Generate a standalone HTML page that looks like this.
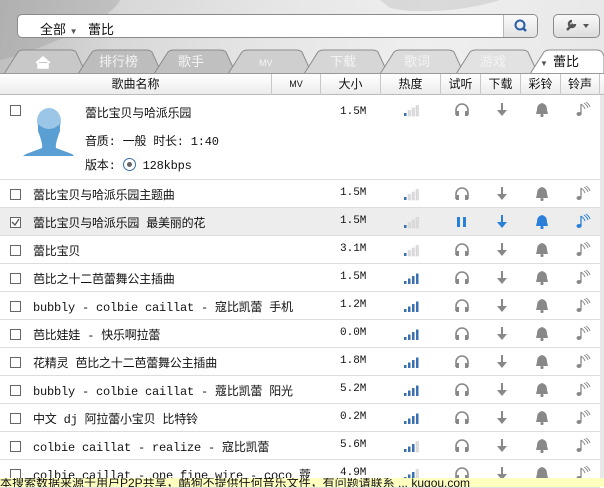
<!DOCTYPE html>
<html><head><meta charset="utf-8"><style>
*{margin:0;padding:0;box-sizing:border-box}
body{width:604px;height:487px;overflow:hidden;font-family:"Liberation Sans","Noto Sans CJK SC",sans-serif;font-size:12px;color:#111;background:#fff;position:relative}
.top{position:absolute;left:0;top:0;width:604px;height:74px;background:linear-gradient(100deg,#bdbdbd 0%,#d8d8d8 20%,#e6e6e6 45%,#efefef 70%,#e8e8e8 100%)}
.search{position:absolute;left:17px;top:14px;width:521px;height:24px;border:1px solid #8a8a8a;border-radius:5px;background:#fff}
.search .a{position:absolute;left:22px;top:4px;font-size:13px}
.search .k{position:absolute;left:70px;top:4px;font-size:13px}
.sbtn{position:absolute;right:0;top:0;width:34px;height:22px;border-left:1px solid #bbb;background:linear-gradient(#fafafa,#e2e2e2);border-radius:0 4px 4px 0}
.tool{position:absolute;left:553px;top:14px;width:47px;height:24px;border:1px solid #8a8a8a;border-radius:5px;background:linear-gradient(#fafafa,#dcdcdc)}
.hdr{position:absolute;left:0;top:73px;width:604px;height:22px;background:linear-gradient(#fff,#ececec);border-top:1px solid #999;border-bottom:1px solid #bbb}
.hdr div{position:absolute;top:0;height:21px;line-height:20px;text-align:center;border-right:1px solid #c8c8c8;font-size:12px}
.row{position:absolute;left:0;width:600px;height:28px;border-bottom:1px solid #ddd;font-family:"Liberation Mono","Noto Sans CJK SC",monospace}
.row .cb{position:absolute;left:10px;top:9px;width:11px;height:11px;border:1px solid #666;background:#fff}
.row .t{position:absolute;left:33px;top:6px;font-size:12px;white-space:nowrap;font-family:"Liberation Mono","Noto Sans CJK SC",monospace;letter-spacing:-0.2px}
.row .s{position:absolute;left:340px;top:7px;font-size:11px}
.row svg,.ic svg{position:absolute;top:0}
.foot{position:absolute;left:0;top:478px;width:604px;height:9px;background:#ffffc0;overflow:hidden;font-size:12px;line-height:10px;white-space:nowrap}
.sb{position:absolute;left:600px;top:95px;width:4px;height:383px;background:#e8e8e8}
</style></head><body>
<div class="top">
<svg width="604" height="74" style="position:absolute;left:0;top:0">
<path d="M0 0 L120 0 C110 20 60 40 20 55 L0 60Z" fill="#999" opacity=".35"/>
<path d="M380 0 L500 0 C470 10 420 15 390 8Z" fill="#aaa" opacity=".3"/>
<g fill="#d0d0d0" stroke="#8c8c8c" stroke-width="1">
<path d="M4 74 L18 52 Q20 50 24 50 L70 50 Q74 50 76 52 L86 74Z" fill="#c8c8c8"/>
<path d="M78 74 L92 52 Q94 50 98 50 L146 50 Q150 50 152 52 L162 74Z" fill="#bdbdbd"/>
<path d="M154 74 L168 52 Q170 50 174 50 L220 50 Q224 50 226 52 L236 74Z" fill="#c0c0c0"/>
<path d="M228 74 L242 52 Q244 50 248 50 L296 50 Q300 50 302 52 L312 74Z" fill="#cfcfcf"/>
<path d="M304 74 L318 52 Q320 50 324 50 L372 50 Q376 50 378 52 L388 74Z" fill="#d6d6d6"/>
<path d="M380 74 L394 52 Q396 50 400 50 L448 50 Q452 50 454 52 L464 74Z" fill="#dcdcdc"/>
<path d="M456 74 L470 52 Q472 50 476 50 L522 50 Q526 50 528 52 L538 74Z" fill="#e2e2e2"/>
<path d="M530 74 L544 52 Q546 50 550 50 L596 50 Q600 50 602 52 L604 56 L604 74Z" fill="#fff"/>
</g>
<path d="M36 63 L43 57 L50 63 M38 62 L38 68 L48 68 L48 62" fill="#fff" stroke="#fff" stroke-width="1.5"/>
<g font-size="13" fill="#f4f4f4" font-family="Liberation Sans,Noto Sans CJK SC,sans-serif">
<text x="99" y="66">排行榜</text><text x="178" y="66">歌手</text><text x="259" y="66" font-size="9">MV</text>
<text x="330" y="66">下载</text><text x="404" y="66">歌词</text><text x="480" y="66">游戏</text></g>
<text x="540" y="66" font-size="8" fill="#555">▼</text>
<text x="553" y="66" font-size="13" fill="#111" font-family="Liberation Sans,Noto Sans CJK SC,sans-serif">蕾比</text>
</svg>
<div class="search"><span class="a">全部 <span style="font-size:8px;color:#555">▼</span></span><span class="k">蕾比</span>
<div class="sbtn"><svg width="34" height="22"><circle cx="16" cy="10" r="4.5" fill="none" stroke="#2a5fa8" stroke-width="2"/><path d="M19 13 L22 16" stroke="#2a5fa8" stroke-width="2.5"/></svg></div></div>
<div class="tool"><svg width="47" height="22"><path d="M13 15 L19 9 M18 6 a3 3 0 1 0 3 3" stroke="#555" stroke-width="2.5" fill="none"/><path d="M29 9 L35 9 L32 13Z" fill="#555"/></svg></div>
</div>
<div class="hdr">
<div style="left:0;width:272px">歌曲名称</div><div style="left:272px;width:49px;font-size:9px">MV</div><div style="left:321px;width:60px">大小</div><div style="left:381px;width:60px">热度</div><div style="left:441px;width:40px">试听</div><div style="left:481px;width:40px">下载</div><div style="left:521px;width:40px">彩铃</div><div style="left:561px;width:39px">铃声</div>
</div>
<div class="sb"></div>
<!-- expanded row -->
<div class="row" style="top:96px;height:84px">
<div class="cb"></div>
<svg width="60" height="70" style="left:20px;top:10px"><ellipse cx="29" cy="15" rx="12" ry="13" fill="#9cc6e8"/><path d="M18 18 Q29 28 40 18 L40 25 Q35 38 36 42 L52 48 L54 50 L3 50 L6 48 L22 42 Q23 38 18 25Z" fill="#5a9fd4"/></svg>
<div class="t" style="left:85px;top:8px">蕾比宝贝与哈派乐园</div>
<div class="t" style="left:85px;top:36px">音质:  一般   时长: 1:40</div>
<div class="t" style="left:85px;top:60px">版本: <span style="display:inline-block;width:13px;height:13px;border:1px solid #3a6ea5;border-radius:50%;vertical-align:-2px;position:relative"><span style="position:absolute;left:3px;top:3px;width:5px;height:5px;border-radius:50%;background:#666"></span></span> 128kbps</div>
<div class="s" style="top:10px">1.5M</div>
</div>
<div id="rows"></div>
<script>
var R=[["蕾比宝贝与哈派乐园主题曲","1.5M",1],["蕾比宝贝与哈派乐园 最美丽的花","1.5M",1,1],["蕾比宝贝","3.1M",1],["芭比之十二芭蕾舞公主插曲","1.5M",4],["bubbly - colbie caillat - 寇比凯蕾 手机","1.2M",4],["芭比娃娃 - 快乐啊拉蕾","0.0M",4],["花精灵 芭比之十二芭蕾舞公主插曲","1.8M",4],["bubbly - colbie caillat - 蔻比凯蕾 阳光","5.2M",4],["中文 dj 阿拉蕾小宝贝 比特铃","0.2M",4],["colbie caillat - realize - 寇比凯蕾","5.6M",3],["colbie caillat - one fine wire - coco 蔻","4.9M",3]];
function icons(y,sel,lv){var c=sel?"#2a7fd8":"#888",s='';
s+='<svg width="20" height="28" style="left:401px">';for(var i=0;i<4;i++){var h=3+i*2.5;s+='<rect x="'+(3+i*4)+'" y="'+(20-h)+'" width="2.5" height="'+h+'" fill="'+(i<lv?'#3a6fb0':'#ddd')+'" stroke="'+(i<lv?'none':'#ccc')+'" stroke-width=".5"/>';}s+='</svg>';
if(sel)s+='<svg width="20" height="28" style="left:452px"><rect x="5" y="9" width="3" height="10" fill="'+c+'"/><rect x="11" y="9" width="3" height="10" fill="'+c+'"/></svg>';
else s+='<svg width="20" height="28" style="left:452px"><path d="M4 19 L4 14 A6 6 0 0 1 16 14 L16 19" fill="none" stroke="'+c+'" stroke-width="1.6"/><rect x="4" y="15" width="3" height="5" fill="'+c+'"/><rect x="13" y="15" width="3" height="5" fill="'+c+'"/></svg>';
s+='<svg width="20" height="28" style="left:492px"><path d="M10 7 L10 18" stroke="'+c+'" stroke-width="2"/><path d="M5 14 L10 20 L15 14Z" fill="'+c+'"/></svg>';
s+='<svg width="20" height="28" style="left:532px"><path d="M10 7 Q15 8 15 14 L16 18 L4 18 L5 14 Q5 8 10 7Z" fill="'+c+'"/><circle cx="10" cy="19.5" r="1.6" fill="'+c+'"/></svg>';
s+='<svg width="20" height="28" style="left:574px"><path d="M7 8 L7 18" stroke="'+c+'" stroke-width="1.3"/><ellipse cx="5" cy="18" rx="2.5" ry="2" fill="'+c+'"/><path d="M7 8 Q10 10 11 13 M10 7 Q13 9 14 12 M12 6 Q15 8 16 11" stroke="'+c+'" fill="none"/></svg>';
return s;}
var h='';
h+='<div class="ic" style="position:absolute;left:0;top:96px;width:600px;height:28px">'+icons(0,0,1)+'</div>';
for(var i=0;i<R.length;i++){var r=R[i],y=180+i*28;
h+='<div class="row" style="top:'+y+'px;'+(r[3]?'background:#ededed;':'')+'"><div class="cb">'+(r[3]?'<svg width="9" height="9" style="top:0;left:0"><path d="M1 4 L4 7 L8 1" stroke="#555" fill="none" stroke-width="1.3"/></svg>':'')+'</div><div class="t">'+r[0]+'</div><div class="s">'+r[1]+'</div>'+icons(y,r[3],r[2])+'</div>';}
document.getElementById('rows').innerHTML=h;
</script>
<div class="foot">本搜索数据来源于用户P2P共享，酷狗不提供任何音乐文件，有问题请联系 ... kugou.com</div>
</body></html>
